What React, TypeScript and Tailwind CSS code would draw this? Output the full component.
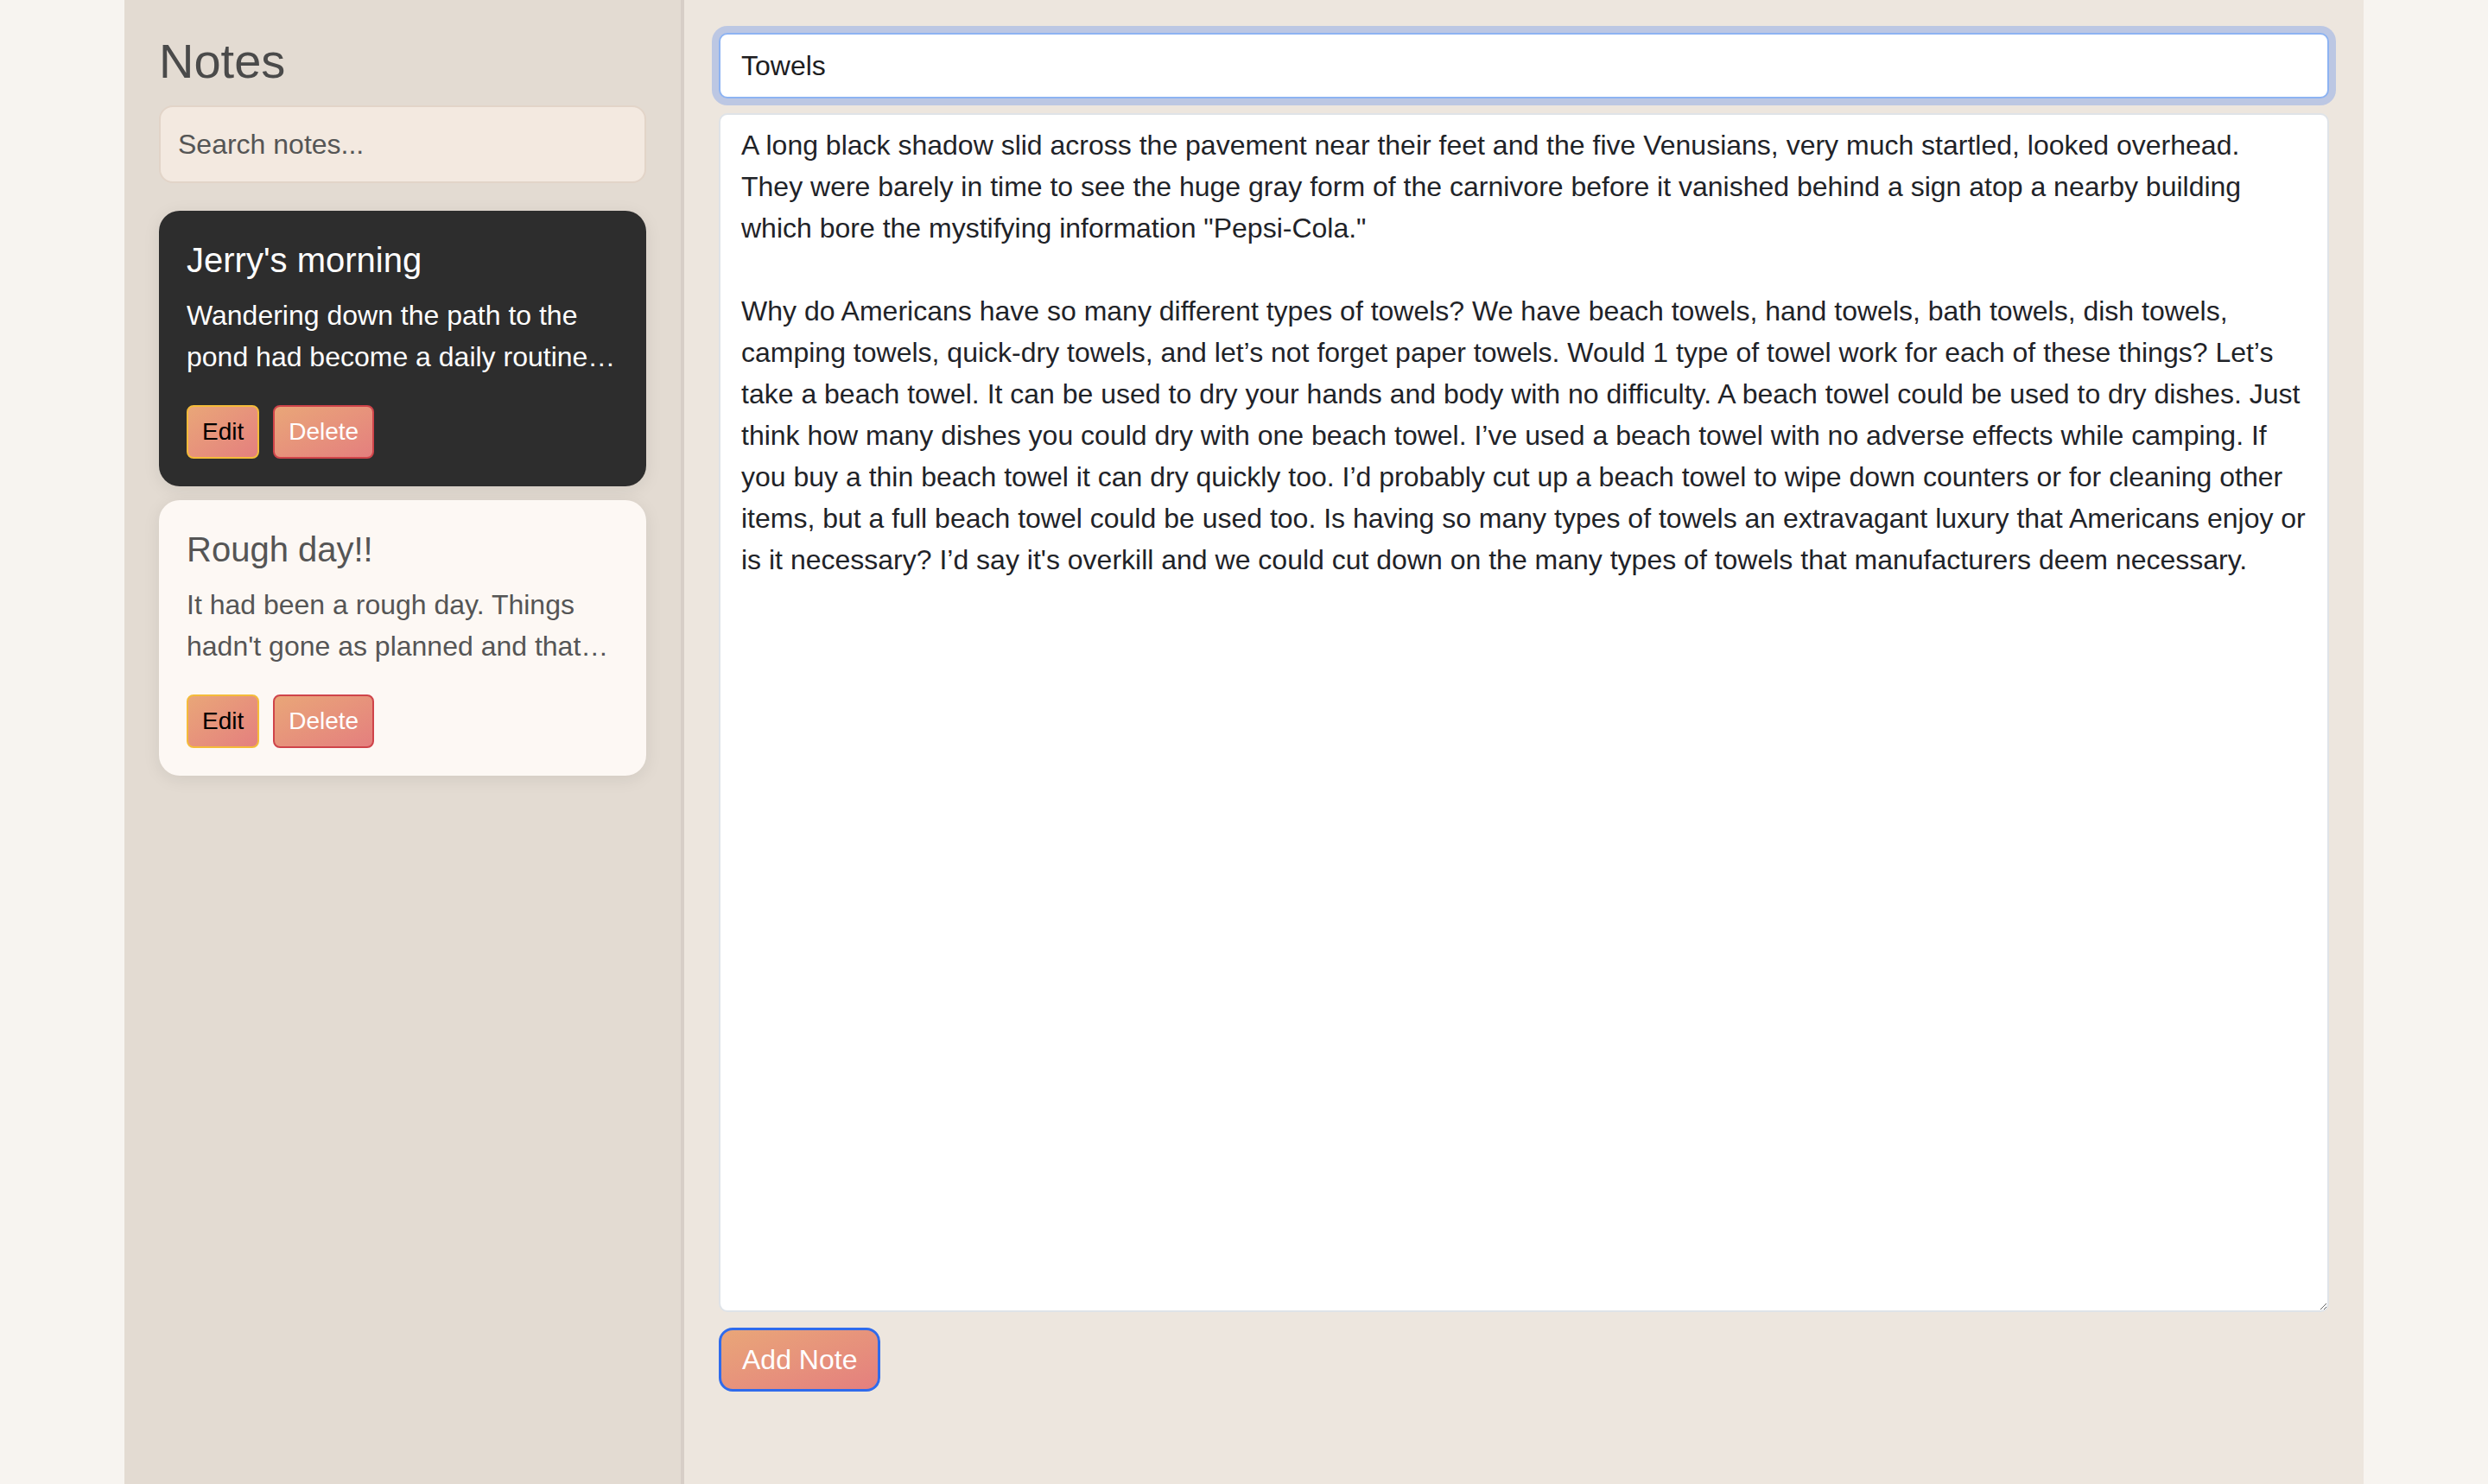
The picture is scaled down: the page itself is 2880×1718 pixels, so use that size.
const notes = [
  {
    title: "Jerry's morning",
    body: "Wandering down the path to the pond had become a daily routine for Jerry, and he never once grew tired of it.",
    active: true,
  },
  {
    title: "Rough day!!",
    body: "It had been a rough day. Things hadn't gone as planned and that was putting it mildly.",
    active: false,
  },
];

const content = `A long black shadow slid across the pavement near their feet and the five Venusians, very much startled, looked overhead. They were barely in time to see the huge gray form of the carnivore before it vanished behind a sign atop a nearby building which bore the mystifying information "Pepsi-Cola."

Why do Americans have so many different types of towels? We have beach towels, hand towels, bath towels, dish towels, camping towels, quick-dry towels, and let’s not forget paper towels. Would 1 type of towel work for each of these things? Let’s take a beach towel. It can be used to dry your hands and body with no difficulty. A beach towel could be used to dry dishes. Just think how many dishes you could dry with one beach towel. I’ve used a beach towel with no adverse effects while camping. If you buy a thin beach towel it can dry quickly too. I’d probably cut up a beach towel to wipe down counters or for cleaning other items, but a full beach towel could be used too. Is having so many types of towels an extravagant luxury that Americans enjoy or is it necessary? I’d say it's overkill and we could cut down on the many types of towels that manufacturers deem necessary.`;

function NoteCard({ title, body, active }: { title: string; body: string; active: boolean }) {
  return (
    <div
      className={
        active
          ? "rounded-[24px] bg-[#2d2d2d] p-[32px] text-white shadow-[0_4px_20px_rgba(0,0,0,0.08)]"
          : "rounded-[24px] bg-[#fdf8f4] p-[32px] text-[#555555] shadow-[0_4px_20px_rgba(0,0,0,0.08)]"
      }
    >
      <h3 className="text-[40px] leading-[50px] font-normal">{title}</h3>
      <p className="mt-[15px] text-[32px] leading-[48px] line-clamp-2">{body}</p>
      <div className="mt-[32px] flex gap-[16px]">
        <button className="rounded-[8px] border-2 border-[#f4bb3a] bg-gradient-to-br from-[#e9a678] to-[#e47f7e] px-[16px] py-[13px] text-[28px] leading-[32px] text-black">
          Edit
        </button>
        <button className="rounded-[8px] border-2 border-[#cf444a] bg-gradient-to-br from-[#e9a678] to-[#e47f7e] px-[16px] py-[13px] text-[28px] leading-[32px] text-white">
          Delete
        </button>
      </div>
    </div>
  );
}

export default function App() {
  return (
    <div className="min-h-screen bg-[#f7f4f0] flex justify-center font-['Liberation_Sans',Arial,sans-serif]">
      <div className="flex h-[1718px] w-[2592px]">
        {/* Sidebar */}
        <aside className="w-[648px] shrink-0 border-r-4 border-[#d7cec7] bg-[#e3dbd2] px-[40px] pt-[39px]">
          <h2 className="text-[56px] leading-[64px] font-normal text-[#4a4a4a]">Notes</h2>
          <input
            type="text"
            placeholder="Search notes..."
            className="mt-[19px] h-[90px] w-full rounded-[16px] border-2 border-[#e2d4c8] bg-[#f3e9e0] px-[20px] text-[32px] text-[#333] placeholder:text-[#555] outline-none"
          />
          <div className="mt-[32px] flex flex-col gap-[16px]">
            {notes.map((n, i) => (
              <NoteCard key={i} title={n.title} body={n.body} active={n.active} />
            ))}
          </div>
        </aside>

        {/* Editor */}
        <main className="flex-1 bg-[#ede6de] px-[40px] pt-[38px]">
          <input
            type="text"
            defaultValue="Towels"
            className="block h-[76px] w-full rounded-[10px] border-2 border-[#8db3f2] bg-white px-[24px] text-[32px] text-[#1d1d1f] outline-none ring-8 ring-[#bcc7e3]"
          />
          <textarea
            defaultValue={content}
            className="mt-[17px] block h-[1388px] w-full rounded-[10px] border-2 border-[#dfe3e8] bg-white px-[24px] pt-[11px] text-[32px] leading-[48px] text-[#1f2328] outline-none"
          />
          <button className="mt-[18px] h-[74px] rounded-[16px] border-[3px] border-[#2f6bec] bg-gradient-to-br from-[#e9a678] to-[#e47f7e] px-[24px] text-[32px] text-white">
            Add Note
          </button>
        </main>
      </div>
    </div>
  );
}
